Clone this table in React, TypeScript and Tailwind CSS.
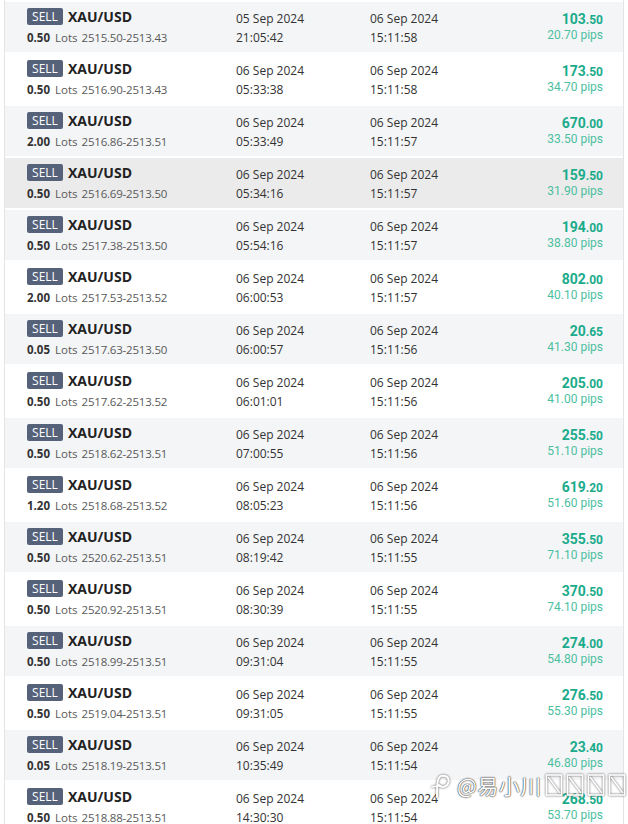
import React from 'react';

type Trade = {
    lots: string;
    prices: string;
    openDate: string;
    openTime: string;
    closeDate: string;
    closeTime: string;
    amount: string;
    pips: string;
};

const trades: Trade[] = [
    { lots: '0.50', prices: '2515.50-2513.43', openDate: '05 Sep 2024', openTime: '21:05:42', closeDate: '06 Sep 2024', closeTime: '15:11:58', amount: '103.50', pips: '20.70' },
    { lots: '0.50', prices: '2516.90-2513.43', openDate: '06 Sep 2024', openTime: '05:33:38', closeDate: '06 Sep 2024', closeTime: '15:11:58', amount: '173.50', pips: '34.70' },
    { lots: '2.00', prices: '2516.86-2513.51', openDate: '06 Sep 2024', openTime: '05:33:49', closeDate: '06 Sep 2024', closeTime: '15:11:57', amount: '670.00', pips: '33.50' },
    { lots: '0.50', prices: '2516.69-2513.50', openDate: '06 Sep 2024', openTime: '05:34:16', closeDate: '06 Sep 2024', closeTime: '15:11:57', amount: '159.50', pips: '31.90' },
    { lots: '0.50', prices: '2517.38-2513.50', openDate: '06 Sep 2024', openTime: '05:54:16', closeDate: '06 Sep 2024', closeTime: '15:11:57', amount: '194.00', pips: '38.80' },
    { lots: '2.00', prices: '2517.53-2513.52', openDate: '06 Sep 2024', openTime: '06:00:53', closeDate: '06 Sep 2024', closeTime: '15:11:57', amount: '802.00', pips: '40.10' },
    { lots: '0.05', prices: '2517.63-2513.50', openDate: '06 Sep 2024', openTime: '06:00:57', closeDate: '06 Sep 2024', closeTime: '15:11:56', amount: '20.65', pips: '41.30' },
    { lots: '0.50', prices: '2517.62-2513.52', openDate: '06 Sep 2024', openTime: '06:01:01', closeDate: '06 Sep 2024', closeTime: '15:11:56', amount: '205.00', pips: '41.00' },
    { lots: '0.50', prices: '2518.62-2513.51', openDate: '06 Sep 2024', openTime: '07:00:55', closeDate: '06 Sep 2024', closeTime: '15:11:56', amount: '255.50', pips: '51.10' },
    { lots: '1.20', prices: '2518.68-2513.52', openDate: '06 Sep 2024', openTime: '08:05:23', closeDate: '06 Sep 2024', closeTime: '15:11:56', amount: '619.20', pips: '51.60' },
    { lots: '0.50', prices: '2520.62-2513.51', openDate: '06 Sep 2024', openTime: '08:19:42', closeDate: '06 Sep 2024', closeTime: '15:11:55', amount: '355.50', pips: '71.10' },
    { lots: '0.50', prices: '2520.92-2513.51', openDate: '06 Sep 2024', openTime: '08:30:39', closeDate: '06 Sep 2024', closeTime: '15:11:55', amount: '370.50', pips: '74.10' },
    { lots: '0.50', prices: '2518.99-2513.51', openDate: '06 Sep 2024', openTime: '09:31:04', closeDate: '06 Sep 2024', closeTime: '15:11:55', amount: '274.00', pips: '54.80' },
    { lots: '0.50', prices: '2519.04-2513.51', openDate: '06 Sep 2024', openTime: '09:31:05', closeDate: '06 Sep 2024', closeTime: '15:11:55', amount: '276.50', pips: '55.30' },
    { lots: '0.05', prices: '2518.19-2513.51', openDate: '06 Sep 2024', openTime: '10:35:49', closeDate: '06 Sep 2024', closeTime: '15:11:54', amount: '23.40', pips: '46.80' },
    { lots: '0.50', prices: '2518.88-2513.51', openDate: '06 Sep 2024', openTime: '14:30:30', closeDate: '06 Sep 2024', closeTime: '15:11:54', amount: '268.50', pips: '53.70' },
];

// row under the mouse pointer in the screenshot
const HOVERED = 3;

const TradeRow: React.FC<{ trade: Trade; index: number }> = ({ trade, index }) => {
    const [whole, cents] = trade.amount.split('.');
    const bg = index === HOVERED ? 'bg-[#ebebeb]' : index % 2 === 0 ? 'bg-[#f4f5f7]' : 'bg-white';

    return (
        <div className={`h-[52px] border-t-2 border-white flex items-start pl-[22px] pr-[20px] pt-[6px] ${bg}`}>
            {/* Instrument + lots */}
            <div className="w-[209px] flex flex-col">
                <div className="flex items-center gap-[5px] h-[17px]">
                    <span className="bg-[#56627a] text-white text-[12px] leading-[17px] w-[36px] text-center rounded-[2px]">SELL</span>
                    <span className="text-[14px] font-bold text-[#222] leading-[17px]">XAU/USD</span>
                </div>
                <div className="mt-[5px] text-[11.5px] leading-[15px] text-[#595959] whitespace-nowrap">
                    <span className="font-bold text-[#333] mr-[5px]">{trade.lots}</span>
                    <span className="mr-[4px]">Lots</span>
                    <span className="tracking-[-0.2px]">{trade.prices}</span>
                </div>
            </div>
            {/* Open time */}
            <div className="w-[134px] text-[12px] leading-[19px] text-[#333] pt-[1px]">
                <div>{trade.openDate}</div>
                <div>{trade.openTime}</div>
            </div>
            {/* Close time */}
            <div className="w-[120px] text-[12px] leading-[19px] text-[#333] pt-[1px]">
                <div>{trade.closeDate}</div>
                <div>{trade.closeTime}</div>
            </div>
            {/* Profit */}
            <div className="flex-1 flex flex-col items-end pt-[3px]" style={{ fontFamily: 'Roboto, sans-serif' }}>
                <div className="text-[#1aab8b] font-bold leading-[16px]">
                    <span className="text-[14px]">{whole}</span>
                    <span className="text-[12px]">.{cents}</span>
                </div>
                <div className="text-[12px] leading-[15px] text-[#4dbf9f]">{trade.pips} pips</div>
            </div>
        </div>
    );
};

const TofuBox: React.FC = () => (
    <svg width="18" height="24" viewBox="0 0 18 24" className="block" style={{ filter: 'drop-shadow(0 0 1px #555)' }}>
        <rect x="1.5" y="2" width="15" height="20" fill="none" stroke="#fff" strokeWidth="1.6" />
        <path d="M3 4 L15 20" stroke="#fff" strokeWidth="1.4" />
    </svg>
);

const Watermark: React.FC = () => (
    <div
        className="absolute left-[430px] top-[772px] flex items-center text-white text-[21px] leading-[26px]"
        style={{ fontFamily: '"Noto Sans CJK SC", sans-serif', textShadow: '0 0 1px #444, 0 0 1px #444, 0 0 2px #777' }}
    >
        <svg width="24" height="26" viewBox="0 0 24 26" style={{ filter: 'drop-shadow(0 0 1px #555)' }}>
            <path d="M7 25 C7 17 7 11 8 8 C9 4 12 3 15 4 C19 5 20 10 17 13 C14 16 10 15 9 13" fill="none" stroke="#fff" strokeWidth="2" strokeLinecap="round" />
            <path d="M2 15 C5 14 8 14 11 14" fill="none" stroke="#fff" strokeWidth="1.6" strokeLinecap="round" />
        </svg>
        <span className="ml-[3px] tracking-[0.5px]">@易小川</span>
        <span className="flex items-center gap-[3px] ml-[3px]">
            <TofuBox />
            <TofuBox />
            <TofuBox />
            <TofuBox />
        </span>
    </div>
);

export default function App() {
    return (
        <div className="relative w-[628px] h-[824px] overflow-hidden bg-white" style={{ fontFamily: '"Open Sans", "Noto Sans", sans-serif' }}>
            <div className="ml-[4px] w-[620px] border-l border-r border-[#e4e4e4]">
                {trades.map((t, i) => (
                    <TradeRow key={i} trade={t} index={i} />
                ))}
            </div>
            <Watermark />
        </div>
    );
}
